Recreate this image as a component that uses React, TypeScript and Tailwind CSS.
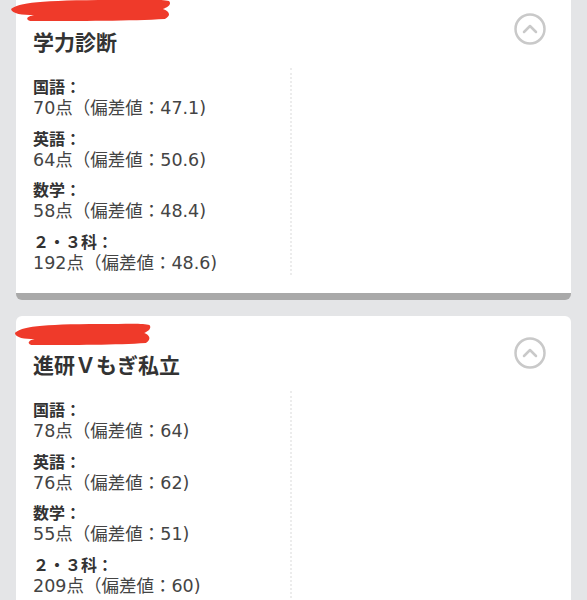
import React from 'react';

interface Score {
  label: string;
  value: string;
}

interface ExamCardProps {
  title: string;
  scores: Score[];
  first?: boolean;
}

const font = { fontFamily: '"DejaVu Sans", "Noto Sans CJK JP", sans-serif' };
const cjk = { fontFamily: '"Noto Sans CJK JP", "Noto Sans", sans-serif' };

function ChevronCircle() {
  return (
    <svg width="34" height="34" viewBox="0 0 34 34" className="shrink-0">
      <circle cx="17" cy="17" r="14.5" fill="none" stroke="#c9c9c9" strokeWidth="2.5" />
      <path d="M11 20 L17 14 L23 20" fill="none" stroke="#c9c9c9" strokeWidth="2.5" strokeLinecap="round" strokeLinejoin="round" />
    </svg>
  );
}

function Scribble({ w }: { w: number }) {
  return (
    <svg width={w} height="22" viewBox="0 0 160 22" preserveAspectRatio="none" className="absolute">
      <path
        d="M1 10 C8 4 30 1 100 1 C130 1 150 0 157 2 C160 5 156 8 151 10 C157 12 160 16 153 20 C120 22 70 22 20 22 C14 20 18 17 24 16 C12 16 2 15 1 10 Z"
        fill="#ef3a2a"
      />
    </svg>
  );
}

function ExamCard({ title, scores, first }: ExamCardProps) {
  return (
    <div
      className={
        first
          ? 'relative -mt-[7px] mx-4 rounded-md bg-white border-b-[7px] border-[#a9a9a9]'
          : 'relative mx-4 mt-4 rounded-md bg-white'
      }
    >
      <div className="relative h-[23px]">
        <div className={first ? 'absolute -left-[6px] top-[6px]' : 'absolute -left-[2px] top-[7px]'}>
          <Scribble w={first ? 162 : 138} />
        </div>
      </div>
      <div className="flex items-start justify-between pl-[17px] pr-[24px]">
        <h2 className="mt-[10px] text-[21px] font-bold leading-[30px] text-[#333]" style={cjk}>
          {title}
        </h2>
        <div className={first ? 'mt-[-4px]' : 'mt-[-3px]'}>
          <ChevronCircle />
        </div>
      </div>
      <div className="mt-[20px] flex pl-[17px] pb-[18px]">
        <div className="flex w-[257px] flex-col gap-[7px]">
          {scores.map((s) => (
            <div key={s.label} className="flex flex-col">
              <span className="text-[16px] font-bold leading-[21px] text-[#333]" style={cjk}>
                {s.label}
              </span>
              <span className="text-[17.5px] leading-[23.5px] text-[#444]">{s.value}</span>
            </div>
          ))}
        </div>
        <div className="-mt-[8px] w-0 self-stretch border-l-2 border-dotted border-[#ececec]" />
      </div>
    </div>
  );
}

export default function App() {
  return (
    <div className="h-[600px] w-full overflow-hidden bg-[#e4e5e7]" style={font}>
      <ExamCard
        first
        title="学力診断"
        scores={[
          { label: '国語：', value: '70点（偏差値：47.1)' },
          { label: '英語：', value: '64点（偏差値：50.6)' },
          { label: '数学：', value: '58点（偏差値：48.4)' },
          { label: '２・３科：', value: '192点（偏差値：48.6)' },
        ]}
      />
      <ExamCard
        title="進研Ｖもぎ私立"
        scores={[
          { label: '国語：', value: '78点（偏差値：64)' },
          { label: '英語：', value: '76点（偏差値：62)' },
          { label: '数学：', value: '55点（偏差値：51)' },
          { label: '２・３科：', value: '209点（偏差値：60)' },
        ]}
      />
    </div>
  );
}
